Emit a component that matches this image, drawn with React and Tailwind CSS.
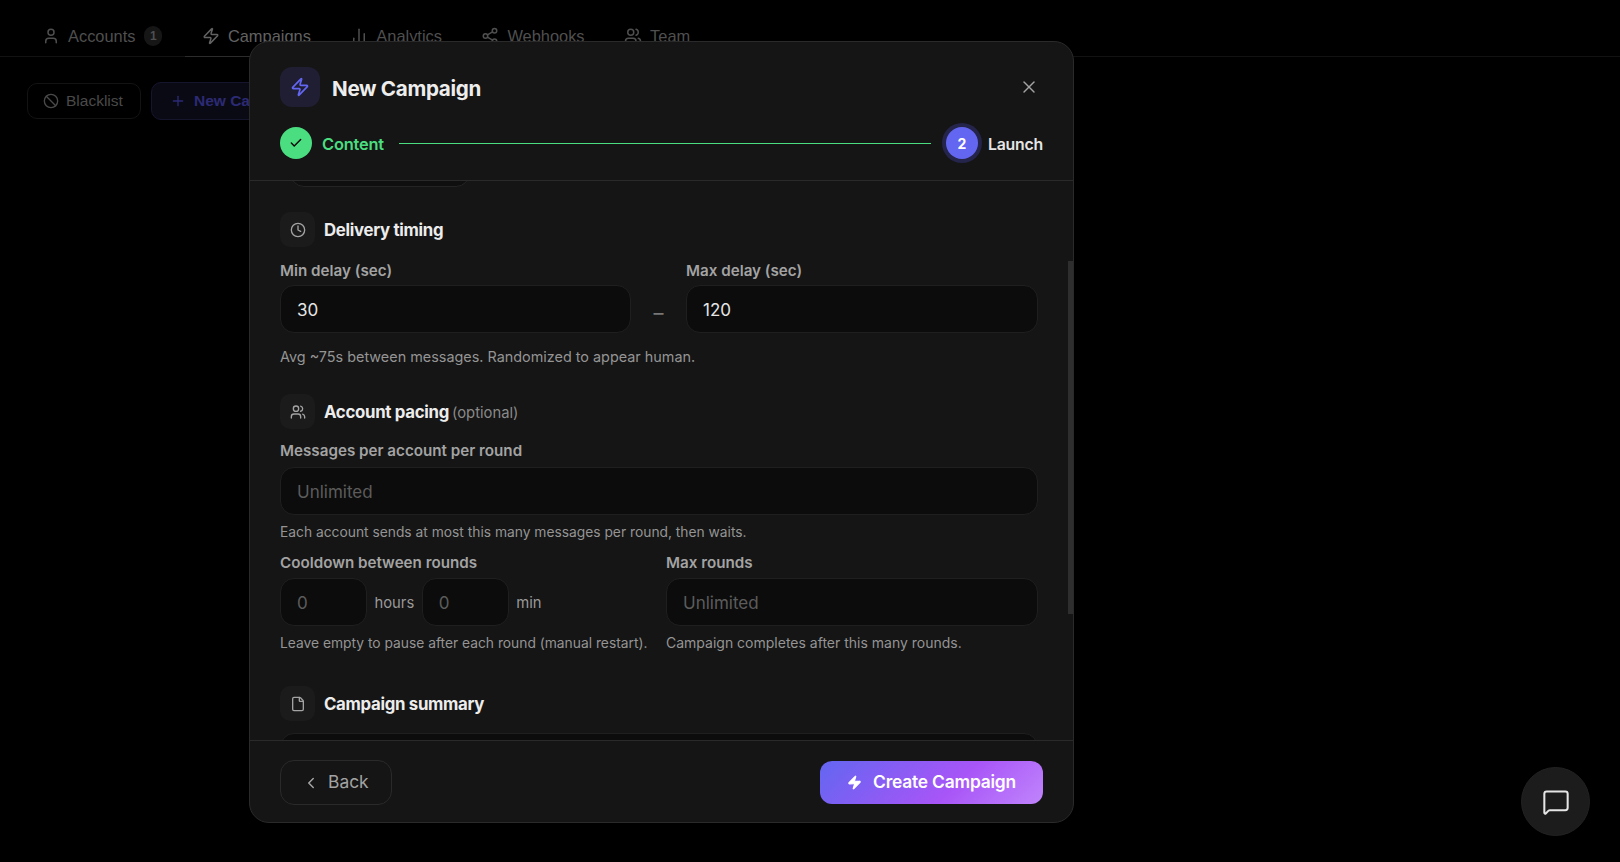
import React from 'react';
import {
  User, Zap, ChartNoAxesColumn, Share2, Users, Ban, Plus, X, Check, Clock, File, ChevronLeft, MessageSquare,
} from 'lucide-react';

const tabs = [
  { label: 'Accounts', Icon: User, badge: '1' },
  { label: 'Campaigns', Icon: Zap, active: true },
  { label: 'Analytics', Icon: ChartNoAxesColumn },
  { label: 'Webhooks', Icon: Share2 },
  { label: 'Team', Icon: Users },
];

function Field({ className = '', ...props }) {
  return (
    <input
      {...props}
      readOnly
      className={`h-[48px] rounded-[14px] border border-[#1f1f1f] bg-[#0c0c0c] px-4 pt-[2px] text-[17px] text-[#e5e5e5] outline-none placeholder:text-[#5c5c5c] ${className}`}
    />
  );
}

function SectionTitle({ Icon, title, note }) {
  return (
    <div className="flex h-[35px] items-center gap-[9px]">
      <div className="flex h-[35px] w-[35px] items-center justify-center rounded-[10px] bg-[#1b1b1b]">
        <Icon size={16} className="text-[#a3a3a3]" />
      </div>
      <h3 className="pt-[2px] text-[16.8px] font-bold tracking-[-0.3px] text-[#ececec]">
        {title}
        {note && <span className="ml-[3px] text-[14.8px] font-normal tracking-normal text-[#8a8a8a]">{note}</span>}
      </h3>
    </div>
  );
}

function Label({ children, className = '' }) {
  return <label className={`block h-[20px] text-[15.2px] leading-[20px] font-semibold text-[#a3a3a3] ${className}`}>{children}</label>;
}

function Help({ children, className = '' }) {
  return <p className={`h-[18px] leading-[18px] text-[#949494] ${className}`}>{children}</p>;
}

export default function App() {
  return (
    <div className="relative h-[862px] overflow-hidden bg-black font-['Inter',sans-serif]">
      {/* Page behind the dialog */}
      <nav className="flex h-[57px] gap-[5.5px] border-b border-[#121212] pt-[16px] pl-[25px] font-['Liberation_Sans',sans-serif] text-[16.4px] text-[#4f4f4f]">
        {tabs.map(({ label, Icon, badge, active }) => (
          <div
            key={label}
            className={`-mb-px flex items-center gap-2 border-b px-[17px] ${active ? 'border-[#2c2c2c] text-[#626262]' : 'border-transparent'}`}
          >
            <Icon size={18} />
            <span>{label}</span>
            {badge && (
              <span className="ml-px flex h-[20px] w-[18px] items-center justify-center rounded-full bg-[#161616] text-[12px] font-bold">{badge}</span>
            )}
          </div>
        ))}
      </nav>
      <div className="flex items-center gap-[10px] pt-[25px] pl-[27px] font-['Liberation_Sans',sans-serif] text-[15.5px]">
        <button className="flex h-[36px] w-[114px] items-center gap-[7px] rounded-[10px] border border-[#131313] pl-[15px] text-[#4a4a4a]">
          <Ban size={16} />
          Blacklist
        </button>
        <button className="flex h-[38px] w-[200px] items-center gap-[8px] rounded-[10px] border border-[#16152e] bg-[#0a0a14] pl-[18px] font-bold text-[#2c2a75]">
          <Plus size={16} />
          New Campaign
        </button>
      </div>

      {/* Dialog */}
      <div className="absolute top-[41px] left-[249px] flex h-[782px] w-[825px] flex-col overflow-hidden rounded-[20px] border border-[#2a2a2a] bg-[#151515]">
        <header className="h-[139px] shrink-0 border-b border-[#2a2a2a] px-[30px] pt-[25px]">
          <div className="flex h-[40px] items-center">
            <div className="flex h-[40px] w-[40px] items-center justify-center rounded-[12px] bg-[#1f1e33]">
              <Zap size={20} className="text-[#6366f1]" />
            </div>
            <h2 className="mt-[4px] ml-[12px] text-[20.6px] font-bold tracking-[-0.3px] text-[#ededed]">New Campaign</h2>
            <X size={20} strokeWidth={1.75} className="mr-[4px] ml-auto text-[#a3a3a3]" />
          </div>
          <div className="mt-[16px] flex h-[40px] items-center">
            <div className="flex h-[32px] w-[32px] items-center justify-center rounded-full bg-[#4ade80]">
              <Check size={14} strokeWidth={2.5} className="text-[#0a0a0a]" />
            </div>
            <span className="ml-[10px] pt-[2px] text-[16.4px] font-semibold tracking-[-0.2px] text-[#4ade80]">Content</span>
            <div className="mx-[15px] h-px flex-1 bg-[#4ade80]" />
            <div className="flex h-[32px] w-[32px] items-center justify-center rounded-full bg-[#6366f1] text-[14px] font-bold text-white shadow-[0_0_0_4px_#25244a]">
              2
            </div>
            <span className="ml-[10px] pt-[3px] text-[15.8px] font-semibold tracking-[-0.2px] text-[#e5e5e5]">Launch</span>
          </div>
        </header>

        <div className="relative min-h-0 flex-1 overflow-hidden pr-[35px] pl-[30px]">
          <div className="mt-[-34px] ml-[10px] h-[40px] w-[180px] rounded-[14px] border border-[#242424] bg-[#0f0f0f]" />

          <div className="mt-[25px]">
            <SectionTitle Icon={Clock} title="Delivery timing" />
            <div className="mt-[14px] flex items-end">
              <div className="w-[351px]">
                <Label className="mb-[4px]">Min delay (sec)</Label>
                <Field className="w-full" defaultValue="30" />
              </div>
              <div className="flex h-[48px] flex-1 items-center justify-center pt-[8px] text-[20px] text-[#777777]">–</div>
              <div className="w-[352px]">
                <Label className="mb-[4px]">Max delay (sec)</Label>
                <Field className="w-full" defaultValue="120" />
              </div>
            </div>
            <Help className="mt-[15px] text-[14.4px]">Avg ~75s between messages. Randomized to appear human.</Help>
          </div>

          <div className="mt-[28px]">
            <SectionTitle Icon={Users} title="Account pacing" note="(optional)" />
            <Label className="mt-[12px] mb-[6px]">Messages per account per round</Label>
            <Field className="w-full" placeholder="Unlimited" />
            <Help className="mt-[8px] text-[13.8px]">Each account sends at most this many messages per round, then waits.</Help>
            <div className="mt-[12px] flex">
              <div className="w-[386px]">
                <Label className="mb-[5px]">Cooldown between rounds</Label>
                <div className="flex items-center text-[14.8px] text-[#9a9a9a]">
                  <Field className="w-[87px]" placeholder="0" />
                  <span className="mx-[7.5px] pt-[3px]">hours</span>
                  <Field className="w-[87px]" placeholder="0" />
                  <span className="ml-[7.5px] pt-[3px]">min</span>
                </div>
                <Help className="mt-[8px] text-[13.8px]">Leave empty to pause after each round (manual restart).</Help>
              </div>
              <div className="flex-1">
                <Label className="mb-[5px]">Max rounds</Label>
                <Field className="w-full" placeholder="Unlimited" />
                <Help className="mt-[8px] text-[14px]">Campaign completes after this many rounds.</Help>
              </div>
            </div>
          </div>

          <div className="mt-[34px]">
            <SectionTitle Icon={File} title="Campaign summary" />
            <div className="mt-[12px] h-[60px] rounded-[14px] border border-[#1f1f1f] bg-[#0c0c0c]" />
          </div>

          <div className="absolute top-[80px] right-0 h-[353px] w-[5px] bg-[#2e2e2e]" />
        </div>

        <footer className="flex h-[82px] shrink-0 items-center justify-between border-t border-[#2a2a2a] px-[30px] pt-[2px]">
          <button className="flex h-[45px] w-[112px] items-center gap-[8px] rounded-[14px] border border-[#2a2a2a] pl-[23px] text-[17.4px] text-[#a3a3a3]">
            <ChevronLeft size={18} className="ml-[-2px]" />
            Back
          </button>
          <button className="flex h-[43px] w-[223px] items-center justify-center gap-[11px] rounded-[12px] bg-[linear-gradient(135deg,#6366f1,#a855f7_60%,#c084fc)] text-[17.4px] font-semibold tracking-[-0.2px] text-white">
            <Zap size={15} fill="currentColor" />
            Create Campaign
          </button>
        </footer>
      </div>

      {/* Chat launcher */}
      <button className="absolute right-[30px] bottom-[26px] flex h-[69px] w-[69px] items-center justify-center rounded-full border border-[#222222] bg-[#1c1c1c] text-[#e5e5e5]">
        <MessageSquare size={28} strokeWidth={1.75} />
      </button>
    </div>
  );
}
